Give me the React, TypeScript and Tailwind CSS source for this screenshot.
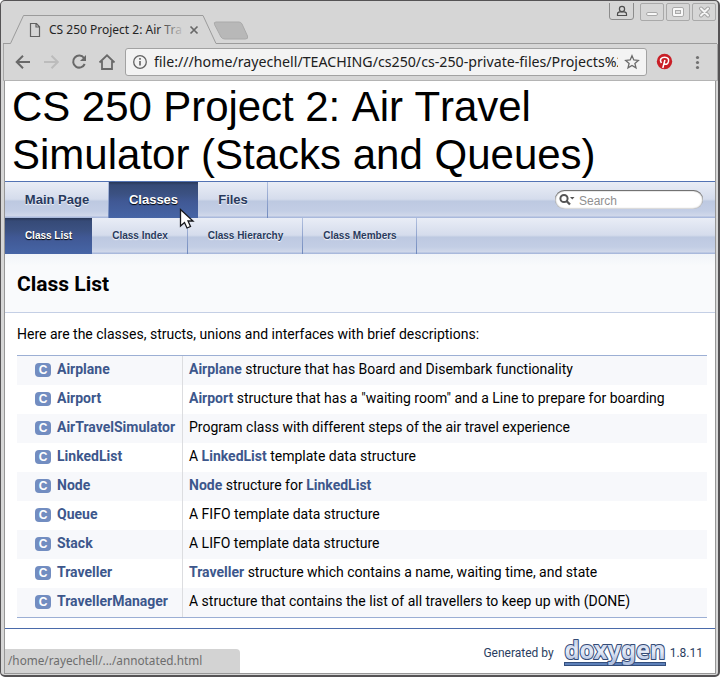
import React from "react";

type Part = string | { link: string };

const rows: { name: string; desc: Part[] }[] = [
  { name: "Airplane", desc: [{ link: "Airplane" }, " structure that has Board and Disembark functionality"] },
  { name: "Airport", desc: [{ link: "Airport" }, ' structure that has a "waiting room" and a Line to prepare for boarding'] },
  { name: "AirTravelSimulator", desc: ["Program class with different steps of the air travel experience"] },
  { name: "LinkedList", desc: ["A ", { link: "LinkedList" }, " template data structure"] },
  { name: "Node", desc: [{ link: "Node" }, " structure for ", { link: "LinkedList" }] },
  { name: "Queue", desc: ["A FIFO template data structure"] },
  { name: "Stack", desc: ["A LIFO template data structure"] },
  { name: "Traveller", desc: [{ link: "Traveller" }, " structure which contains a name, waiting time, and state"] },
  { name: "TravellerManager", desc: ["A structure that contains the list of all travellers to keep up with (DONE)"] },
];

const navBg =
  "bg-[linear-gradient(to_bottom,#e9edf6_0,#d5dcec_17px,#cdd6e8_18px,#bdc9e1_19px,#c3cee5_29px,#d0d8ea_34px,#a9b9dc_35px,#a9b9dc_36px)]";
const activeBg =
  "bg-[linear-gradient(to_bottom,#283757_0,#364a77_3px,#3b5182_12px,#405894_19px,#4665a6_36px)]";
const sep =
  "w-px h-9 shrink-0 bg-[linear-gradient(to_bottom,#b2c0df,#7089bd)]";

function TabStrip() {
  return (
    <header className="h-[43px] shrink-0 flex">
      <svg width="714" height="43" viewBox="3 1 714 43" fill="none">
        <path d="M3 43.5H10.5L23.500 15.500H203L216 43.500H717" stroke="#9b9b9b" />
        <path d="M216 22H239Q241 22 242 24L247.500 36Q248.500 39 245.500 39H225Q222 39 221 37L214.500 24.500Q213.500 22 216 22Z" fill="#b8b8b8" stroke="#aaaaaa" />
        <path d="M30.500 23.500H36.500L39.500 26.800V36.500H30.500ZM36 23.500V27H39.500" stroke="#616161" strokeWidth="1.2" />
        <defs>
          <linearGradient id="tabText" gradientUnits="userSpaceOnUse" x1="158" y1="0" x2="185" y2="0">
            <stop stopColor="#242424" /><stop offset="1" stopColor="#242424" stopOpacity="0" />
          </linearGradient>
          <clipPath id="tabClip"><path d="M45 20H182V40H45Z" /></clipPath>
        </defs>
        <text x="49" y="34" fontFamily="Noto Sans, sans-serif" fontSize="12" fill="url(#tabText)" clipPath="url(#tabClip)">CS 250 Project 2: Air Travel</text>
        <path d="M190.500 26.500L197.500 33.500M197.500 26.500L190.500 33.500" stroke="#686868" strokeWidth="1.7" />
        <path d="M609.500 3V17Q609.500 19.500 612 19.500H631Q633.500 19.500 633.500 17V3" stroke="#8c8c8c" />
        <circle cx="622" cy="9" r="2.600" stroke="#4e4e4e" strokeWidth="1.2" />
        <path d="M617.500 15.500V14Q617.500 11.800 620 11.800H624Q626.500 11.800 626.500 14V15.500Z" stroke="#4e4e4e" strokeWidth="1.2" />
        <g stroke="#a9a9a9">
          <rect x="640.500" y="3.500" width="23" height="17" rx="1.500" />
          <rect x="666.500" y="3.500" width="23" height="17" rx="1.500" />
          <rect x="692.500" y="3.500" width="23" height="17" rx="1.500" />
          <rect x="646.500" y="12.500" width="11" height="3" rx="1.500" fill="#f8f8f8" />
          <rect x="672.500" y="7.500" width="11" height="9" rx="1.500" fill="#f8f8f8" />
          <rect x="675.500" y="10.500" width="5" height="3" fill="#ddd" />
        </g>
        <path d="M701 8.500L708 15.500M708 8.500L701 15.500" stroke="#a4a4a4" strokeWidth="4" strokeLinecap="round" />
        <path d="M701 8.500L708 15.500M708 8.500L701 15.500" stroke="#f5f5f5" strokeWidth="2" strokeLinecap="round" />
      </svg>
    </header>
  );
}

function Toolbar() {
  return (
    <div className="h-[37px] shrink-0 flex items-center border-b border-[#b4b4b4] border-x border-x-[#a6a6a6]">
      <svg width="122" height="36" viewBox="4 44 122 36" fill="none" strokeWidth="2">
        <path d="M30 62H17M23 55.700L16.700 62L23 68.300" stroke="#696969" />
        <path d="M44 62H57M51.500 55.700L57.800 62L51.500 68.300" stroke="#bcbcbc" />
        <path d="M84 58A6 6 0 1 0 84.700 64" stroke="#696969" />
        <path d="M86 55V61H80Z" fill="#696969" />
        <path d="M99.500 62.500L107 55.300L114.500 62.500M102 61V69H112V61" stroke="#696969" strokeWidth="1.8" />
      </svg>
      <div className="w-[522px] h-7 -ml-px border border-[#a2a2a2] rounded-[3px] bg-[#f3f3f3] flex items-center shrink-0">
        <svg width="28" height="26" viewBox="126 49 28 26" fill="none" className="shrink-0">
          <circle cx="140" cy="62" r="6.300" stroke="#626262" strokeWidth="1.300" />
          <path d="M140 61V65.500M140 58V59.700" stroke="#626262" strokeWidth="1.600" />
        </svg>
        <div className="w-[464px] overflow-hidden whitespace-nowrap font-['Noto_Sans',sans-serif] text-[14.2px] leading-6 text-[#202020]">file:///home/rayechell/TEACHING/cs250/cs-250-private-files/Projects%20</div>
        <svg width="26" height="26" viewBox="618 49 26 26" fill="none" className="shrink-0">
          <path d="M632 55.700L633.800 60L638.300 60.400L634.900 63.400L636 67.900L632 65.500L628 67.900L629.100 63.400L625.700 60.400L630.200 60Z" stroke="#6b6b6b" strokeWidth="1.300" />
        </svg>
      </div>
      <svg width="65" height="36" viewBox="647 44 65 36">
        <circle cx="664.500" cy="61.500" r="7.700" fill="#c91f27" />
        <path d="M661.500 63C659 59.500 661.500 57.200 664.700 57.200C668 57.200 669 59.300 668.500 61.500C668 64.500 665 65 664.300 63.300M664.900 60L662.800 68" stroke="white" strokeWidth="1.500" fill="none" />
        <circle cx="697.500" cy="57.500" r="1.600" fill="#717171" /><circle cx="697.500" cy="62.500" r="1.600" fill="#717171" /><circle cx="697.500" cy="67.500" r="1.600" fill="#717171" />
      </svg>
    </div>
  );
}

function NavLabel({ children, width, active, small }: { children: string; width: string; active?: boolean; small?: boolean }) {
  return (
    <div className={`${width} ${active ? activeBg + " text-white [text-shadow:0_1px_1px_#000]" : "text-[#283a5d] pl-px [text-shadow:0_1px_1px_rgba(255,255,255,0.9)]"} ${small ? "text-[10px]" : "text-[13px]"} font-['Liberation_Sans',sans-serif] h-9 shrink-0 text-center font-bold leading-9 whitespace-nowrap`}>
      {children}
    </div>
  );
}

function Nav() {
  return (
    <nav className="shrink-0 border-t border-[#5373b4]">
      <div className={`flex h-9 ${navBg}`}>
        <NavLabel width="w-[103px]">Main Page</NavLabel>
        <span className={sep} />
        <NavLabel width="w-[89px]" active>Classes</NavLabel>
        <NavLabel width="w-[69px]">Files</NavLabel>
        <span className={sep} />
        <div className="ml-auto mr-3 mt-[8px] w-[148px] h-[19px] rounded-full bg-white shadow-[inset_0_1px_1px_#666,inset_0_0_2px_#777] flex items-center">
          <svg width="24" height="19" fill="none">
            <circle cx="9" cy="8.500" r="3.600" stroke="#555" strokeWidth="2" />
            <path d="M11.500 11L15 14.500" stroke="#555" strokeWidth="2.300" />
            <path d="M15 7H19.500L17.250 9.500Z" fill="#555" />
          </svg>
          <span className="font-['Liberation_Sans',sans-serif] text-[12px] text-[#909090] leading-4 pt-0.5">Search</span>
        </div>
      </div>
      <div className={`flex h-9 ${navBg}`}>
        <NavLabel width="w-[87px]" small active>Class List</NavLabel>
        <NavLabel width="w-[95px]" small>Class Index</NavLabel>
        <span className={sep} />
        <NavLabel width="w-[114px]" small>Class Hierarchy</NavLabel>
        <span className={sep} />
        <NavLabel width="w-[113px]" small>Class Members</NavLabel>
        <span className={sep} />
      </div>
    </nav>
  );
}

function ClassTable() {
  return (
    <div className="ml-3 w-[690px] border-y border-[#9cafd4]">
      {rows.map((row) => (
        <div key={row.name} className="flex h-[29px] odd:bg-[#f7f8fb] text-[14px] leading-[27px]">
          <div className="w-[166px] shrink-0 border-r border-[#dcdde0] flex">
            <span className="ml-[18px] mt-[7px] mr-1.5 w-4 h-3.5 rounded-[4px] bg-[#728dc1] text-white font-['Liberation_Sans',sans-serif] font-bold text-[12px] leading-[14px] text-center">C</span>
            <b className="text-[#3d578c]">{row.name}</b>
          </div>
          <div className="pl-1.5 whitespace-pre">
            {row.desc.map((part, i) => typeof part === "string" ? part : <b key={i} className="text-[#3d578c]">{part.link}</b>)}
          </div>
        </div>
      ))}
    </div>
  );
}

function DoxygenLogo() {
  return (
    <svg width="104" height="30" viewBox="0 0 104 30" className="mx-[9px] mr-[3px]">
      <defs>
        <linearGradient id="dox" gradientUnits="userSpaceOnUse" x1="0" y1="3" x2="0" y2="26">
          <stop offset="0" stopColor="#c6d2ea" /><stop offset="0.450" stopColor="#e6ecf7" /><stop offset="0.850" stopColor="#b3c3e2" />
        </linearGradient>
      </defs>
      <rect x="1.500" y="24.500" width="101" height="3" fill="#5d80b9" stroke="#344f7d" />
      <text x="1.500" y="21" textLength="101" lengthAdjust="spacingAndGlyphs" fontFamily="Noto Sans, sans-serif" fontWeight="bold" fontSize="25.500" fill="url(#dox)" stroke="#354c77" strokeWidth="2.200" strokeLinejoin="round" paintOrder="stroke">doxygen</text>
    </svg>
  );
}

export default function App() {
  return (
    <div className="relative w-[720px] h-[677px] overflow-hidden bg-[#d6d6d6] border-[#555355] border-t border-l border-r-2 border-b-2 rounded-[5px] pl-0.5 flex flex-col font-[Roboto,sans-serif]">
      <TabStrip />
      <Toolbar />
      <main className="ml-px w-[712px] h-[593px] shrink-0 border-x border-b border-[#979797] bg-white text-black flex flex-col">
        <h1 className="h-[100px] shrink-0 px-[7px] pt-[2px] font-['Liberation_Sans',sans-serif] text-[42px] leading-[48px] [font-kerning:none]"><span className="tracking-[-0.06px]">CS 250 Project 2: Air Travel</span><br />Simulator (Stacks and Queues)</h1>
        <Nav />
        <div className="h-[59px] shrink-0 bg-[linear-gradient(to_bottom,#f1f4f9,#f9fafc_12px)] border-b border-[#c4cfe5] px-3 text-[21px] leading-[60px] font-bold">Class List</div>
        <p className="h-[42px] shrink-0 px-3 text-[14px] leading-[42px]">Here are the classes, structs, unions and interfaces with brief descriptions:</p>
        <ClassTable />
        <footer className="mt-2.5 border-t border-[#4a6aaa] flex items-center justify-end pr-[12px] h-[48px] shrink-0 -mb-1 text-[12px] text-[#2a3d61]">
          Generated by <DoxygenLogo /> 1.8.11
        </footer>
      </main>
      <div className="absolute left-[4px] top-[648px] w-[235px] h-6 bg-[#d3d3d3] rounded-tr-[4px] pl-[3px] font-['Noto_Sans',sans-serif] text-[11.75px] leading-[23px] text-[#6d6d6d]">/home/rayechell/.../annotated.html</div>
      <svg className="absolute left-[178px] top-[207px]" width="17" height="24">
        <path d="M1.500 1.500V18L5.500 14.500L8 20L11.500 18.500L9 13H14Z" fill="white" stroke="#17181d" strokeWidth="1.300" />
      </svg>
    </div>
  );
}
